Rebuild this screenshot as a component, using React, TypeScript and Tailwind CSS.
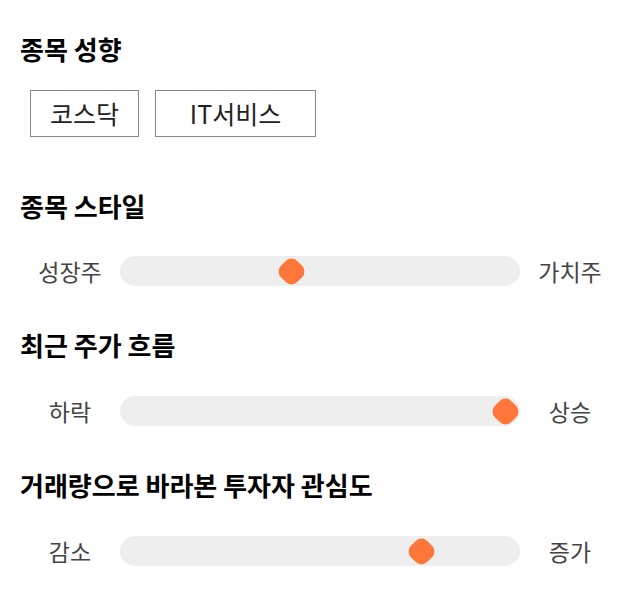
import React from "react";

const font = { fontFamily: '"Noto Sans CJK KR", "Noto Sans", sans-serif' };

function Heading({ children, className = "" }: { children: React.ReactNode; className?: string }) {
  return (
    <div className={`h-[32px] leading-[32px] text-[26px] font-bold text-black ${className}`}>{children}</div>
  );
}

function SliderRow({ left, right, pos, className = "" }: { left: string; right: string; pos: number; className?: string }) {
  return (
    <div className={`flex items-center h-[30px] ${className}`}>
      <div className="w-[100px] text-center text-[23px] leading-[30px] text-[#444]">{left}</div>
      <div className="relative w-[400px] h-[30px] rounded-full bg-[#eeeeee]">
        <div
          className="absolute top-[3.5px] w-[23px] h-[23px] rotate-45 rounded-[8px] bg-[#ff763b]"
          style={{ left: pos - 11.5 }}
        />
      </div>
      <div className="w-[100px] text-center text-[23px] leading-[30px] text-[#444]">{right}</div>
    </div>
  );
}

export default function App() {
  return (
    <div className="w-[640px] h-[606px] bg-white pl-[20px] pt-[33px]" style={font}>
      <Heading>종목 성향</Heading>
      <div className="flex gap-[16px] ml-[10px] mt-[25px]">
        <div className="w-[109px] h-[47px] border border-[#888] flex items-center justify-center text-[25px] text-[#222]">코스닥</div>
        <div className="w-[161px] h-[47px] border border-[#888] flex items-center justify-center text-[25px] text-[#222]">IT서비스</div>
      </div>
      <Heading className="mt-[53px]">종목 스타일</Heading>
      <SliderRow className="mt-[34px]" left="성장주" right="가치주" pos={171} />
      <Heading className="mt-[43px]">최근 주가 흐름</Heading>
      <SliderRow className="mt-[35px]" left="하락" right="상승" pos={385} />
      <Heading className="mt-[43px]">거래량으로 바라본 투자자 관심도</Heading>
      <SliderRow className="mt-[35px]" left="감소" right="증가" pos={301} />
    </div>
  );
}
